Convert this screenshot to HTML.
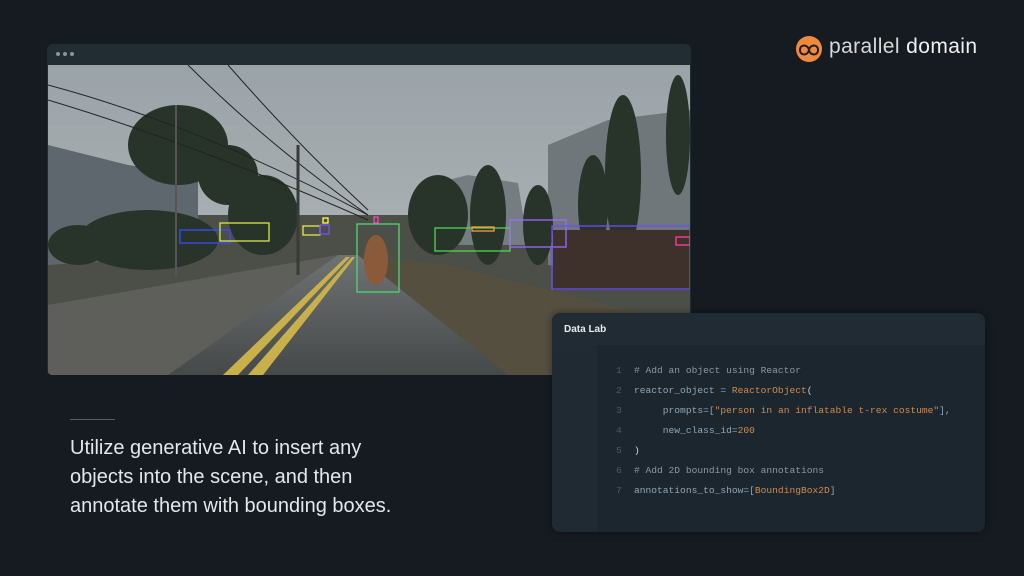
<!DOCTYPE html>
<html><head><meta charset="utf-8"><style>
body{margin:0;width:1024px;height:576px;background:#161b22;overflow:hidden;font-family:"Liberation Sans",sans-serif;position:relative}
.win{position:absolute;left:47px;top:44px;width:644px;height:331px;border-radius:6px;background:#222c33;overflow:hidden}
.dot{position:absolute;top:8px;width:4px;height:4px;border-radius:50%;background:#8a949c}
.scene{position:absolute;left:1px;top:21px;width:642px;height:310px}
.code{position:absolute;left:552px;top:313px;width:433px;height:219px;border-radius:8px;background:#1c262e;overflow:hidden;box-shadow:0 0 8px rgba(0,0,0,.4)}
.hd{height:32px;background:#202b33;color:#e6ecef;font-size:10px;font-weight:bold;padding:11px 0 0 12px;box-sizing:border-box}
.gut{position:absolute;left:0;top:32px;width:45px;bottom:0;background:#1f2a32}
.ln{position:absolute;font-family:"Liberation Mono",monospace;font-size:9.6px;white-space:pre}
.n{left:64px;color:#4e5b64}.t{left:82px;color:#8fa7bb}
.c{color:#8a98a3}.o{color:#d08a4a}.w{color:#c9d3da}
</style></head><body>
<div class="win">
<div class="dot" style="left:9px"></div><div class="dot" style="left:16px"></div><div class="dot" style="left:23px"></div>
<svg class="scene" viewBox="0 0 642 310">
<defs><linearGradient id="sky" x1="0" y1="0" x2="0" y2="1"><stop offset="0" stop-color="#9aa3a8"/><stop offset="1" stop-color="#b5babb"/></linearGradient>
<linearGradient id="rd" x1="0" y1="0" x2="0" y2="1"><stop offset="0" stop-color="#6e7273"/><stop offset="1" stop-color="#46494a"/></linearGradient></defs>
<rect width="642" height="310" fill="url(#sky)"/>
<rect y="150" width="642" height="160" fill="#4c4f48"/>
<polygon points="0,80 80,100 150,110 150,190 0,200" fill="#5e676d"/>
<polygon points="500,80 560,55 642,45 642,220 500,200" fill="#70777b"/>
<polygon points="380,120 420,110 470,118 480,180 380,180" fill="#767d80"/>
<g fill="#28332a"><ellipse cx="100" cy="175" rx="70" ry="30"/><ellipse cx="215" cy="150" rx="35" ry="40"/><ellipse cx="130" cy="80" rx="50" ry="40"/><ellipse cx="180" cy="110" rx="30" ry="30"/><ellipse cx="390" cy="150" rx="30" ry="40"/><ellipse cx="440" cy="150" rx="18" ry="50"/><ellipse cx="575" cy="110" rx="18" ry="80"/><ellipse cx="545" cy="140" rx="15" ry="50"/><ellipse cx="490" cy="160" rx="15" ry="40"/><ellipse cx="630" cy="70" rx="12" ry="60"/><ellipse cx="30" cy="180" rx="30" ry="20"/></g>
<polygon points="290,190 310,190 460,310 120,310" fill="url(#rd)"/>
<polygon points="0,240 290,190 120,310 0,310" fill="#5e5f5a"/>
<polygon points="310,190 460,310 642,310 642,260 400,200" fill="#554f40"/>
<polygon points="298,192 302,192 190,310 175,310" fill="#c9b14a"/>
<polygon points="304,192 307,192 215,310 200,310" fill="#c9b14a"/>
<rect x="505" y="165" width="137" height="60" fill="#3e302b"/>
<g fill="none" stroke="#222" stroke-width="1"><path d="M0,20 Q150,60 320,150"/><path d="M0,35 Q150,80 320,155"/><path d="M140,0 Q220,80 320,150"/><path d="M180,0 Q250,80 320,145"/></g>
<line x1="128" y1="40" x2="128" y2="210" stroke="#555" stroke-width="2"/>
<line x1="250" y1="80" x2="250" y2="210" stroke="#3a3a36" stroke-width="3"/>
<g fill="none" stroke-width="1.3">
<rect x="132" y="165" width="50" height="13" stroke="#3a4cff"/>
<rect x="172" y="158" width="49" height="18" stroke="#d8e84a"/>
<rect x="255" y="161" width="17" height="9" stroke="#e8e84a"/>
<rect x="272" y="160" width="9" height="9" stroke="#7a4cff"/>
<rect x="275" y="153" width="5" height="5" stroke="#ffff40"/>
<rect x="309" y="159" width="42" height="68" stroke="#4cd870"/>
<rect x="326" y="152" width="4" height="6" stroke="#ff40c0"/>
<rect x="387" y="163" width="75" height="23" stroke="#4cd84c"/>
<rect x="424" y="162" width="22" height="4" stroke="#ff9a40"/>
<rect x="462" y="155" width="56" height="27" stroke="#9a6cff"/>
<rect x="504" y="161" width="138" height="63" stroke="#6a4cff"/>
<rect x="628" y="172" width="14" height="8" stroke="#ff40a0"/>
</g>
<ellipse cx="328" cy="195" rx="12" ry="25" fill="#8a5a3a"/>
</svg>
</div>
<div style="position:absolute;left:70px;top:419px;width:45px;height:1px;background:#555c63"></div>
<div style="position:absolute;left:70px;top:434px;color:#e4e8eb;font-size:20px;line-height:29px;width:352px">Utilize generative AI to insert any objects into the scene, and then annotate them with bounding boxes.</div>
<svg style="position:absolute;left:795px;top:35px" width="28" height="28" viewBox="0 0 28 28"><circle cx="14" cy="14" r="13" fill="#f08a3a"/><path d="M5,15 c0,-6 8,-6 9,0 c1,6 9,6 9,0 c0,-6 -8,-6 -9,0 c-1,6 -9,6 -9,0z" fill="none" stroke="#1a1e24" stroke-width="2"/></svg>
<div style="position:absolute;left:829px;top:35px;font-size:21px;color:#f0f0f0;letter-spacing:0.4px"><span style="color:#d8d8d8">parallel</span> domain</div>
<div class="code"><div class="hd">Data Lab</div><div class="gut"></div>
<div class="ln n" style="top:52px">1</div><div class="ln t c" style="top:52px"># Add an object using Reactor</div>
<div class="ln n" style="top:72px">2</div><div class="ln t" style="top:72px">reactor_object = <span class="o">ReactorObject</span><span class="w">(</span></div>
<div class="ln n" style="top:92px">3</div><div class="ln t" style="top:92px">     prompts=[<span class="o">"person in an inflatable t-rex costume"</span>],</div>
<div class="ln n" style="top:112px">4</div><div class="ln t" style="top:112px">     new_class_id=<span class="o">200</span></div>
<div class="ln n" style="top:132px">5</div><div class="ln t w" style="top:132px">)</div>
<div class="ln n" style="top:152px">6</div><div class="ln t c" style="top:152px"># Add 2D bounding box annotations</div>
<div class="ln n" style="top:172px">7</div><div class="ln t" style="top:172px">annotations_to_show=[<span class="o">BoundingBox2D</span>]</div>
</div>
</body></html>
